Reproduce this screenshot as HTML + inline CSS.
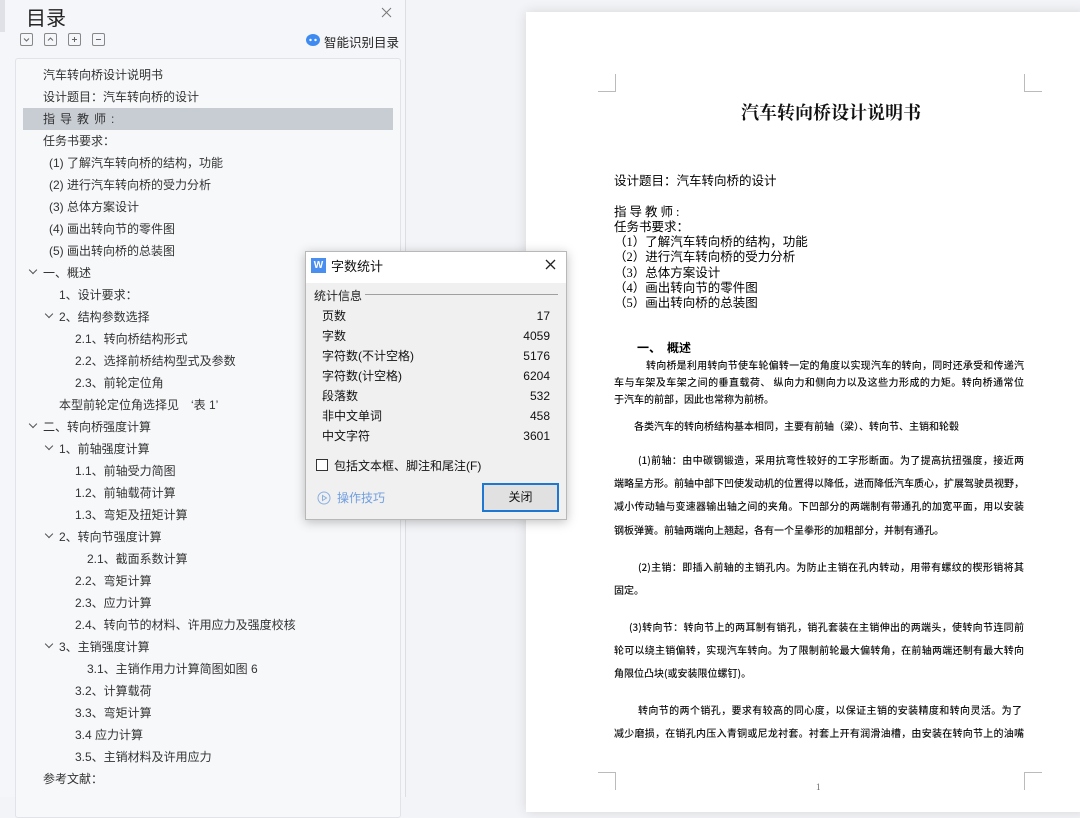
<!DOCTYPE html>
<html><head><meta charset="utf-8"><style>
*{margin:0;padding:0;box-sizing:border-box}
body{width:1080px;height:797px;overflow:hidden;background:#f3f4f7;position:relative;font-family:"Liberation Sans","Noto Sans CJK SC",sans-serif;color:#222}
.a{position:absolute;white-space:nowrap}
#side{position:absolute;left:0;top:0;width:406px;height:797px;background:#f5f6f9;border-right:1px solid #dcdee3}
#strip{position:absolute;left:0;top:0;width:5px;height:32px;background:#dfe1e6}
#list{position:absolute;left:15px;top:58px;width:386px;height:760px;border:1px solid #e1e3e8;border-radius:3px;background:#f7f8fa}
.t{position:absolute;font-size:12px;color:#333;white-space:nowrap;line-height:16px}
.chev{position:absolute;width:6px;height:6px;border-right:1.2px solid #555;border-bottom:1.2px solid #555;transform:rotate(45deg)}
.btn{position:absolute;top:33px;width:13px;height:13px}
#page{position:absolute;left:526px;top:12px;width:560px;height:800px;background:#fff;box-shadow:0 0 12px rgba(0,0,0,.12)}
.cm{position:absolute;width:18px;height:18px;border-color:#bbb;border-style:solid;border-width:0}
.p{position:absolute;left:88px;width:410px;font-size:10px;font-family:"Noto Sans CJK SC",sans-serif;color:#111;white-space:nowrap;text-align:justify;text-align-last:justify;line-height:12px;font-weight:500}
.pl{text-align-last:left}
.b{position:absolute;left:88px;font-size:12.5px;font-family:"Liberation Serif","Noto Sans CJK SC",serif;color:#000;line-height:14px;white-space:nowrap}
#dlg{position:absolute;left:305px;top:251px;width:262px;height:269px;background:#f0f0f0;border:1px solid #b8b8b8;box-shadow:0 2px 10px rgba(0,0,0,.25)}
.r{position:absolute;left:16px;width:228px;font-size:12px;line-height:14px;color:#111}
.r span{float:right}
</style></head><body>
<div id="side">
<div id="strip"></div>
<div class="a" style="left:26px;top:2px;font-size:20px;color:#222">目录</div>
<svg class="a" style="left:381px;top:7px" width="11" height="11"><path d="M1 1L10 10M10 1L1 10" stroke="#777" stroke-width="1"/></svg>
<svg class="btn" style="left:20px" viewBox="0 0 13 13"><rect x=".5" y=".5" width="12" height="12" rx="1.5" fill="none" stroke="#888"/><path d="M4 5.5L6.5 8 9 5.5" fill="none" stroke="#666"/></svg>
<svg class="btn" style="left:44px" viewBox="0 0 13 13"><rect x=".5" y=".5" width="12" height="12" rx="1.5" fill="none" stroke="#888"/><path d="M4 7.5L6.5 5 9 7.5" fill="none" stroke="#666"/></svg>
<svg class="btn" style="left:68px" viewBox="0 0 13 13"><rect x=".5" y=".5" width="12" height="12" rx="1.5" fill="none" stroke="#888"/><path d="M4 6.5H9M6.5 4V9" fill="none" stroke="#666"/></svg>
<svg class="btn" style="left:92px" viewBox="0 0 13 13"><rect x=".5" y=".5" width="12" height="12" rx="1.5" fill="none" stroke="#888"/><path d="M4 6.5H9" fill="none" stroke="#666"/></svg>
<svg class="a" style="left:306px;top:34px" width="14" height="12"><ellipse cx="7" cy="6" rx="7" ry="6" fill="#3d8bf2"/><circle cx="4.5" cy="6" r="1.2" fill="#fff"/><circle cx="9.5" cy="6" r="1.2" fill="#fff"/></svg>
<div class="a" style="left:324px;top:32px;font-size:12.5px;color:#222">智能识别目录</div>
<div id="list"></div>
<div class="a" style="left:23px;top:108px;width:370px;height:22px;background:#c8cdd4"></div>
<div class="t" style="left:43px;top:67px">汽车转向桥设计说明书</div>
<div class="t" style="left:43px;top:89px">设计题目：汽车转向桥的设计</div>
<div class="t" style="left:43px;top:111px;letter-spacing:5px">指导教师:</div>
<div class="t" style="left:43px;top:133px">任务书要求：</div>
<div class="t" style="left:49px;top:155px">(1) 了解汽车转向桥的结构，功能</div>
<div class="t" style="left:49px;top:177px">(2) 进行汽车转向桥的受力分析</div>
<div class="t" style="left:49px;top:199px">(3) 总体方案设计</div>
<div class="t" style="left:49px;top:221px">(4) 画出转向节的零件图</div>
<div class="t" style="left:49px;top:243px">(5) 画出转向桥的总装图</div>
<div class="chev" style="left:30px;top:267px"></div><div class="t" style="left:43px;top:265px">一、概述</div>
<div class="t" style="left:59px;top:287px">1、设计要求：</div>
<div class="chev" style="left:46px;top:311px"></div><div class="t" style="left:59px;top:309px">2、结构参数选择</div>
<div class="t" style="left:75px;top:331px">2.1、转向桥结构形式</div>
<div class="t" style="left:75px;top:353px">2.2、选择前桥结构型式及参数</div>
<div class="t" style="left:75px;top:375px">2.3、前轮定位角</div>
<div class="t" style="left:59px;top:397px">本型前轮定位角选择见　‘表 1’</div>
<div class="chev" style="left:30px;top:421px"></div><div class="t" style="left:43px;top:419px">二、转向桥强度计算</div>
<div class="chev" style="left:46px;top:443px"></div><div class="t" style="left:59px;top:441px">1、前轴强度计算</div>
<div class="t" style="left:75px;top:463px">1.1、前轴受力简图</div>
<div class="t" style="left:75px;top:485px">1.2、前轴载荷计算</div>
<div class="t" style="left:75px;top:507px">1.3、弯矩及扭矩计算</div>
<div class="chev" style="left:46px;top:531px"></div><div class="t" style="left:59px;top:529px">2、转向节强度计算</div>
<div class="t" style="left:87px;top:551px">2.1、截面系数计算</div>
<div class="t" style="left:75px;top:573px">2.2、弯矩计算</div>
<div class="t" style="left:75px;top:595px">2.3、应力计算</div>
<div class="t" style="left:75px;top:617px">2.4、转向节的材料、许用应力及强度校核</div>
<div class="chev" style="left:46px;top:641px"></div><div class="t" style="left:59px;top:639px">3、主销强度计算</div>
<div class="t" style="left:87px;top:661px">3.1、主销作用力计算简图如图 6</div>
<div class="t" style="left:75px;top:683px">3.2、计算载荷</div>
<div class="t" style="left:75px;top:705px">3.3、弯矩计算</div>
<div class="t" style="left:75px;top:727px">3.4 应力计算</div>
<div class="t" style="left:75px;top:749px">3.5、主销材料及许用应力</div>
<div class="t" style="left:43px;top:771px">参考文献：</div>
</div>

<div id="page">
<div class="cm" style="left:72px;top:62px;border-right-width:1px;border-bottom-width:1px"></div>
<div class="cm" style="left:498px;top:62px;border-left-width:1px;border-bottom-width:1px"></div>
<div class="cm" style="left:72px;top:760px;border-right-width:1px;border-top-width:1px"></div>
<div class="cm" style="left:498px;top:760px;border-left-width:1px;border-top-width:1px"></div>
<div class="a" style="left:0;width:610px;text-align:center;top:87px;font-size:18px;font-weight:bold;font-family:'Noto Serif CJK SC',serif;color:#111">汽车转向桥设计说明书</div>
<div class="b" style="top:162px">设计题目：汽车转向桥的设计</div>
<div class="b" style="top:193px;letter-spacing:3px">指导教师:</div>
<div class="b" style="top:208px">任务书要求：</div>
<div class="b" style="top:223px">（1）了解汽车转向桥的结构，功能</div>
<div class="b" style="top:238px">（2）进行汽车转向桥的受力分析</div>
<div class="b" style="top:254px">（3）总体方案设计</div>
<div class="b" style="top:269px">（4）画出转向节的零件图</div>
<div class="b" style="top:284px">（5）画出转向桥的总装图</div>
<div class="a" style="left:111px;top:327px;font-size:12px;font-weight:bold;font-family:'Noto Sans CJK SC',sans-serif;color:#000">一、　概述</div>
<div class="p" style="top:347px;left:120px;width:378px">转向桥是利用转向节使车轮偏转一定的角度以实现汽车的转向，同时还承受和传递汽</div>
<div class="p" style="top:364px">车与车架及车架之间的垂直载荷、 纵向力和侧向力以及这些力形成的力矩。转向桥通常位</div>
<div class="p pl" style="top:381px">于汽车的前部，因此也常称为前桥。</div>
<div class="p pl" style="top:408px;left:108px">各类汽车的转向桥结构基本相同，主要有前轴（梁）、转向节、主销和轮毂</div>
<div class="p" style="top:442px;left:112px;width:386px">(1)前轴：由中碳钢锻造，采用抗弯性较好的工字形断面。为了提高抗扭强度，接近两</div>
<div class="p" style="top:465px">端略呈方形。前轴中部下凹使发动机的位置得以降低，进而降低汽车质心，扩展驾驶员视野，</div>
<div class="p" style="top:488px">减小传动轴与变速器输出轴之间的夹角。下凹部分的两端制有带通孔的加宽平面，用以安装</div>
<div class="p pl" style="top:512px">钢板弹簧。前轴两端向上翘起，各有一个呈拳形的加粗部分，并制有通孔。</div>
<div class="p" style="top:549px;left:112px;width:386px">(2)主销：即插入前轴的主销孔内。为防止主销在孔内转动，用带有螺纹的楔形销将其</div>
<div class="p pl" style="top:572px">固定。</div>
<div class="p" style="top:609px;left:103px;width:395px">(3)转向节：转向节上的两耳制有销孔，销孔套装在主销伸出的两端头，使转向节连同前</div>
<div class="p" style="top:632px">轮可以绕主销偏转，实现汽车转向。为了限制前轮最大偏转角，在前轴两端还制有最大转向</div>
<div class="p pl" style="top:655px">角限位凸块(或安装限位螺钉)。</div>
<div class="p" style="top:692px;left:112px;width:384px">转向节的两个销孔，要求有较高的同心度，以保证主销的安装精度和转向灵活。为了</div>
<div class="p" style="top:715px">减少磨损，在销孔内压入青铜或尼龙衬套。衬套上开有润滑油槽，由安装在转向节上的油嘴</div>
<div class="a" style="left:290px;top:770px;font-size:9px;color:#666;font-family:'Liberation Serif',serif">1</div>
</div>

<div id="dlg">
<div class="a" style="left:0;top:0;width:260px;height:31px;background:#fff"></div>
<div class="a" style="left:5px;top:6px;width:15px;height:15px;background:#4a8ff0;color:#fff;font-size:10px;line-height:15px;text-align:center;font-weight:bold">W</div>
<div class="a" style="left:25px;top:4px;font-size:13px;color:#111">字数统计</div>
<svg class="a" style="left:239px;top:7px" width="11" height="11"><path d="M1 1L10 10M10 1L1 10" stroke="#222" stroke-width="1.3"/></svg>
<div class="a" style="left:8px;top:35px;font-size:12px;color:#222">统计信息</div>
<div class="a" style="left:59px;top:42px;width:193px;height:1px;background:#a0a0a0"></div>
<div class="r" style="top:57px">页数<span>17</span></div>
<div class="r" style="top:77px">字数<span>4059</span></div>
<div class="r" style="top:97px">字符数(不计空格)<span>5176</span></div>
<div class="r" style="top:117px">字符数(计空格)<span>6204</span></div>
<div class="r" style="top:137px">段落数<span>532</span></div>
<div class="r" style="top:157px">非中文单词<span>458</span></div>
<div class="r" style="top:177px">中文字符<span>3601</span></div>
<div class="a" style="left:10px;top:207px;width:12px;height:12px;border:1px solid #333;background:#fff"></div>
<div class="a" style="left:28px;top:205px;font-size:12px;color:#111">包括文本框、脚注和尾注(F)</div>
<svg class="a" style="left:11px;top:239px" width="14" height="14"><circle cx="7" cy="7" r="6" fill="none" stroke="#8ab0e0"/><path d="M5.5 4.5V9.5L9.5 7Z" fill="none" stroke="#8ab0e0"/></svg>
<div class="a" style="left:31px;top:237px;font-size:12px;color:#6f9ee0">操作技巧</div>
<div class="a" style="left:176px;top:231px;width:77px;height:29px;border:2px solid #1e78d2;background:#e1e1e1;font-size:12px;line-height:25px;text-align:center;color:#111">关闭</div>
</div>
</body></html>
